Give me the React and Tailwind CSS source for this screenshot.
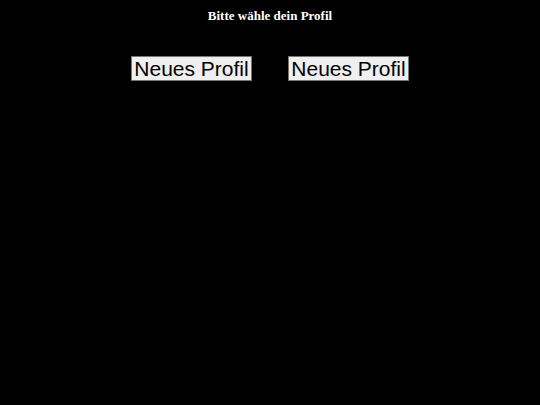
function ProfileButton() {
  return (
    <button className="w-[121px] h-[25px] bg-[#efefef] border border-[#767676] text-black text-[21px] leading-[23px] px-0 font-['Liberation_Sans',Arial,sans-serif]">
      Neues Profil
    </button>
  );
}

export default function App() {
  return (
    <div className="w-[540px] h-[405px] bg-black flex flex-col items-center">
      <h1 className="mt-[8px] text-[13px] leading-[16px] font-bold text-white font-['Liberation_Serif',serif]">
        Bitte wähle dein Profil
      </h1>
      <div className="mt-[32px] flex gap-[36px]">
        <ProfileButton />
        <ProfileButton />
      </div>
    </div>
  );
}
